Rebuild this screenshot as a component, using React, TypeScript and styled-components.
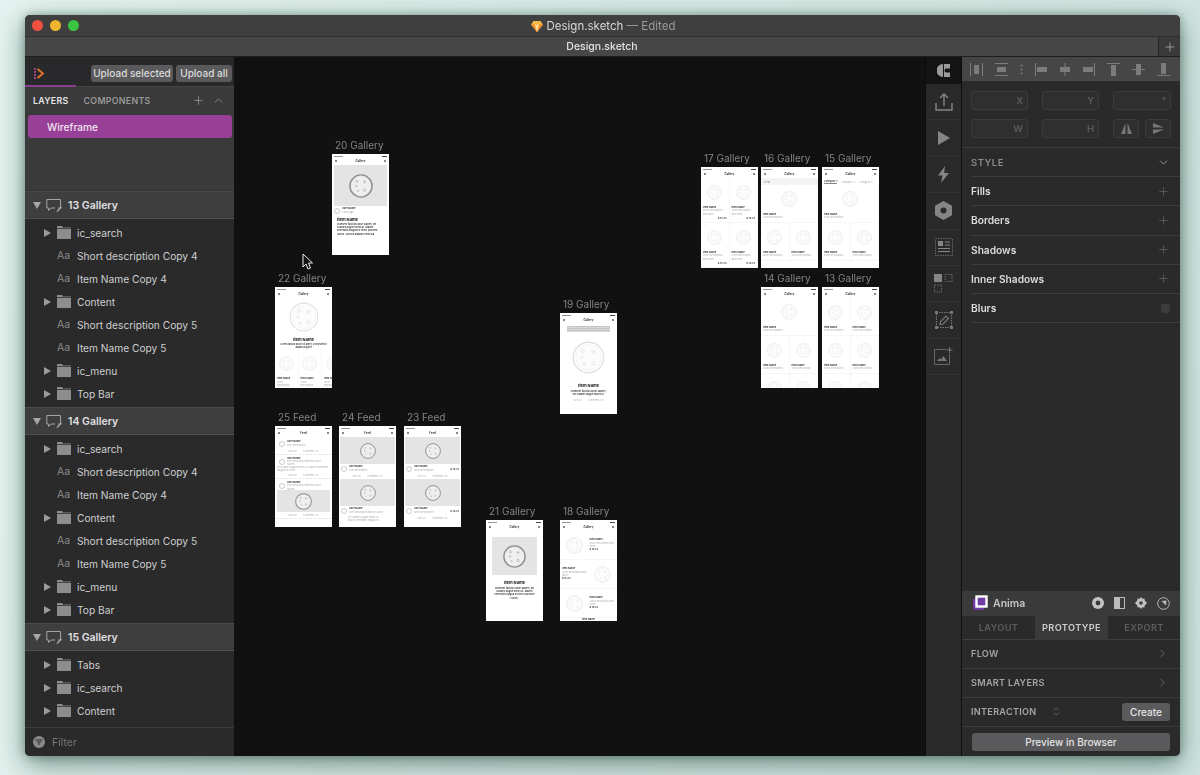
import React from 'react';
import styled, { createGlobalStyle } from 'styled-components';
import { ChevronDown, ChevronRight, ChevronUp, ChevronsUpDown, Plus } from 'lucide-react';

const GlobalStyle = createGlobalStyle`
  html, body { margin: 0; padding: 0; height: 100%; overflow: hidden; }
  body {
    font-family: Inter, "Liberation Sans", sans-serif;
    background: linear-gradient(100deg, #e3f3ef 0%, #d7e8e4 50%, #cfe4df 100%);
  }
`;

const Desktop = styled.div`
  width: 1200px;
  height: 775px;
  box-sizing: border-box;
  padding: 15px 20px 19px 25px;
`;

const Win = styled.div`
  height: 741px;
  display: flex;
  flex-direction: column;
  border-radius: 5px;
  overflow: hidden;
  background: #2a2a2b;
  box-shadow: 0 8px 26px rgba(20, 60, 50, 0.55), 0 0 8px rgba(20, 60, 50, 0.35);
  filter: blur(0.25px);
`;

/* title + tab bars */
const TitleBar = styled.div`
  height: 22px;
  flex: none;
  display: flex;
  align-items: center;
  padding-left: 7px;
  background: #3f3f40;
  border-bottom: 1px solid #2f2f2f;
  box-sizing: border-box;
`;
const Light = styled.span<{ $c: string }>`
  width: 11px;
  height: 11px;
  margin-right: 7px;
  border-radius: 50%;
  background: ${p => p.$c};
`;
const TitleText = styled.div`
  flex: 1;
  display: flex;
  align-items: center;
  justify-content: center;
  gap: 4px;
  margin-right: 60px;
  font-size: 11.5px;
  color: #d8d8d8;
  & em { font-style: normal; color: #9a9a9a; }
`;
const TabBar = styled.div`
  height: 20px;
  flex: none;
  display: flex;
  background: #474748;
  border-bottom: 1px solid #1e1e1e;
  box-sizing: border-box;
`;
const TabName = styled.div`
  flex: 1;
  padding-left: 21px;
  text-align: center;
  font-size: 10.5px;
  line-height: 19px;
  font-weight: 500;
  color: #e2e2e2;
`;
const TabPlus = styled.div`
  width: 21px;
  display: flex;
  align-items: center;
  justify-content: center;
  background: #3a3a3b;
  border-left: 1px solid #222;
  color: #a8a8a8;
`;

const Body = styled.div`
  flex: 1;
  min-height: 0;
  display: flex;
`;

/* left sidebar */
const Sidebar = styled.aside`
  width: 209px;
  flex: none;
  display: flex;
  flex-direction: column;
  background: #2a2a2b;
`;
const PluginBar = styled.div`
  height: 30px;
  flex: none;
  display: flex;
  align-items: center;
  box-sizing: border-box;
  padding: 3px 2px 0 9px;
  background: #29292b;
  border-bottom: 1px solid #444;
  position: relative;
  &::after {
    content: '';
    position: absolute;
    left: 0;
    bottom: -1px;
    width: 51px;
    height: 2px;
    background: #8c3f8e;
  }
`;
const UploadBtn = styled.button<{ $w: number }>`
  width: ${p => p.$w}px;
  height: 17px;
  padding: 0;
  margin-left: 3px;
  border: 0;
  border-radius: 3px;
  background: #5a5a5c;
  color: #dadada;
  font: 500 10px Inter, "Liberation Sans", sans-serif;
  white-space: nowrap;
`;
const Spacer = styled.div`
  flex: 1;
`;
const PagesPanel = styled.div`
  height: 104px;
  flex: none;
  background: #3a3a3b;
  box-sizing: border-box;
  border-bottom: 1px solid #333;
`;
const PagesHead = styled.div`
  height: 28px;
  box-sizing: border-box;
  display: flex;
  align-items: center;
  padding: 0 9px 2px 8px;
  color: #9d9d9d;
`;
const PageTab = styled.span<{ $on?: boolean }>`
  font-size: 8.8px;
  font-weight: 600;
  letter-spacing: 0.3px;
  margin-right: 15px;
  color: ${p => (p.$on ? '#e6e6e6' : '#989898')};
`;
const PageRow = styled.div`
  height: 23px;
  margin: 0 2px 0 3px;
  padding-left: 19px;
  border-radius: 3px;
  background: #983f97;
  color: #f0e4f0;
  font-size: 10.2px;
  font-weight: 500;
  line-height: 24px;
`;
const LayerList = styled.div`
  flex: 1;
  min-height: 0;
  overflow: hidden;
`;
const GroupHead = styled.div`
  height: 28px;
  box-sizing: border-box;
  display: flex;
  align-items: center;
  padding-left: 8px;
  gap: 5px;
  background: #3e3e3f;
  border-top: 1px solid #4a4a4a;
  border-bottom: 1px solid #4f4f4f;
  color: #e0e0e0;
  font-size: 10.5px;
  font-weight: 600;
`;
const GroupItems = styled.div`
  padding: 2px 0;
`;
const Item = styled.div`
  height: 23px;
  display: flex;
  align-items: center;
  padding-left: 18px;
  color: #cfcfcf;
  font-size: 10.2px;
`;
const ArrowSlot = styled.span`
  width: 13px;
  flex: none;
  display: flex;
`;
const IconSlot = styled.span`
  width: 21px;
  flex: none;
  display: flex;
  color: #8a8a8a;
  font-size: 10.5px;
  padding-left: 1px;
  box-sizing: border-box;
`;
const FilterBar = styled.div`
  height: 29px;
  flex: none;
  display: flex;
  align-items: center;
  gap: 7px;
  padding-left: 8px;
  box-sizing: border-box;
  border-top: 1px solid #3c3c3c;
  color: #777;
  font-size: 10.5px;
`;

/* canvas */
const Canvas = styled.main`
  flex: 1;
  position: relative;
  background: #111112;
  overflow: hidden;
`;
const Board = styled.div<{ $x: number; $y: number }>`
  position: absolute;
  left: ${p => p.$x - 234}px;
  top: ${p => p.$y - 57}px;
  width: 57px;
`;
const BoardLabel = styled.div`
  position: absolute;
  left: 3px;
  top: -15px;
  font-size: 10px;
  line-height: 13px;
  color: #848484;
  white-space: nowrap;
`;
const Screen = styled.div`
  height: 101px;
  overflow: hidden;
  background: #fff;
  color: #333;
  font-size: 2.6px;
  display: flex;
  flex-direction: column;
`;
const StatusLine = styled.div`
  height: 2px;
  margin: 1px 2px 0;
  flex: none;
  display: flex;
  justify-content: space-between;
  align-items: center;
  &::before { content: ''; width: 9px; height: 1px; background: #999; }
  &::after { content: ''; width: 5px; height: 1px; background: #444; }
`;
const Nav = styled.div`
  height: 8px;
  flex: none;
  display: flex;
  align-items: center;
  justify-content: space-between;
  padding: 0 3px;
  font-size: 2.8px;
  font-weight: 700;
  color: #333;
  & i { width: 2px; height: 2px; background: #888; display: block; }
`;
const Center = styled.div<{ $h?: number; $grey?: boolean; $inset?: number }>`
  flex: none;
  display: flex;
  align-items: center;
  justify-content: center;
  height: ${p => p.$h ?? 28}px;
  margin: 0 ${p => p.$inset ?? 0}px;
  background: ${p => (p.$grey ? '#e4e4e4' : 'transparent')};
`;
const Cells = styled.div<{ $cols?: number }>`
  flex: none;
  display: grid;
  grid-template-columns: repeat(${p => p.$cols ?? 2}, ${p => (p.$cols ? '23.5px' : '1fr')});
`;
const Cell = styled.div<{ $h?: number }>`
  height: ${p => p.$h ?? 38}px;
  flex: none;
  min-width: 0;
  padding: 0 2px;
  box-sizing: border-box;
  border-right: 1px dotted #efefef;
  border-bottom: 1px dotted #efefef;
  display: flex;
  flex-direction: column;
  overflow: hidden;
`;
const Name = styled.div<{ $big?: boolean; $mid?: boolean }>`
  font-weight: 700;
  color: ${p => (p.$big ? '#111' : '#333')};
  font-size: ${p => (p.$big ? 4 : 2.5)}px;
  line-height: ${p => (p.$big ? 7 : 3.4)}px;
  text-align: ${p => (p.$mid ? 'center' : 'left')};
  white-space: nowrap;
`;
const Note = styled.div<{ $mid?: boolean; $dark?: boolean }>`
  font-size: 2.4px;
  line-height: 3.2px;
  color: ${p => (p.$dark ? '#333' : '#aaa')};
  font-weight: ${p => (p.$dark ? 600 : 400)};
  text-align: ${p => (p.$mid ? 'center' : 'left')};
`;
const Price = styled.div`
  margin-top: 1px;
  font-size: 2.5px;
  font-weight: 700;
  text-align: right;
  color: #333;
`;
const Pad = styled.div<{ $x?: number }>`
  padding: 1px ${p => p.$x ?? 5}px;
  flex: none;
`;
const Filter = styled.div`
  height: 7px;
  flex: none;
  display: flex;
  align-items: center;
  padding: 0 3px;
  color: #888;
  background: #f4f4f4;
`;
const Tabs = styled(Filter)`
  gap: 4px;
  padding: 0 2px;
  white-space: nowrap;
  color: #aaa;
  background: #fff;
  & b { color: #333; font-weight: 600; border-bottom: 1px solid #888; }
`;
const UserLine = styled.div`
  height: 9px;
  flex: none;
  display: flex;
  align-items: center;
  gap: 2px;
  padding: 0 2px;
  & > span:first-child {
    width: 6px;
    height: 6px;
    flex: none;
    border-radius: 50%;
    border: 1px solid #ccc;
    box-sizing: border-box;
  }
  & > div { flex: 1; min-width: 0; }
`;
const Acts = styled.div`
  flex: none;
  display: flex;
  justify-content: center;
  gap: 6px;
  font-size: 2.2px;
  color: #aaa;
  height: 6px;
  align-items: center;
`;
const Stack = styled.div`
  height: 6px;
  margin: 2px 7px 0;
  flex: none;
  background: repeating-linear-gradient(180deg, #c4c4c4 0 1px, #d8d8d8 1px 2px);
`;
const Row18 = styled.div<{ $flip?: boolean }>`
  height: 28px;
  flex: none;
  display: flex;
  flex-direction: ${p => (p.$flip ? 'row-reverse' : 'row')};
  align-items: center;
  gap: 2px;
  padding: 0 2px;
  border-bottom: 1px dotted #eee;
  & > div { flex: 1; min-width: 0; }
`;
const Post = styled.div`
  padding: 2px 2px 0;
  flex: none;
  border-bottom: 1px dotted #ddd;
`;

/* right side */
const ToolStrip = styled.div`
  width: 37px;
  flex: none;
  display: flex;
  flex-direction: column;
  background: #2a2a2b;
  border-left: 1px solid #0c0c0c;
  border-right: 1px solid #0e0e0e;
  box-sizing: border-box;
`;
const ToolTop = styled.div`
  height: 27px;
  flex: none;
  background: #141415;
  display: flex;
  align-items: center;
  justify-content: center;
`;
const Tool = styled.div`
  height: 36.4px;
  flex: none;
  display: flex;
  align-items: center;
  justify-content: center;
  border-bottom: 1px solid #323233;
  box-sizing: border-box;
`;
const Inspector = styled.aside`
  width: 218px;
  flex: none;
  display: flex;
  flex-direction: column;
  background: #2a2a2b;
`;
const AlignBar = styled.div`
  height: 24px;
  flex: none;
  background: #464647;
  display: flex;
  align-items: center;
  justify-content: space-between;
  padding: 0 10px 0 8px;
`;
const Fields = styled.div`
  display: grid;
  grid-template-columns: 57px 57px 58px;
  column-gap: 14px;
  row-gap: 9px;
  padding: 10px 9px;
  border-bottom: 1px solid #3a3a3b;
  height: 67px;
  box-sizing: border-box;
  flex: none;
`;
const Field = styled.div`
  height: 19px;
  box-sizing: border-box;
  padding-right: 4px;
  text-align: right;
  line-height: 18px;
  font-size: 9.5px;
  font-weight: 600;
  color: #5c5c5c;
  background: #2f2f30;
  border: 1px solid #3b3b3c;
  border-radius: 3px;
`;
const FlipPair = styled.div`
  display: flex;
  justify-content: space-between;
`;
const FlipBtn = styled(Field)`
  width: 26px;
  padding: 0;
  display: flex;
  align-items: center;
  justify-content: center;
`;
const StyleRow = styled.div`
  height: 29.2px;
  flex: none;
  box-sizing: border-box;
  margin-left: 9px;
  padding-right: 10px;
  display: flex;
  align-items: center;
  justify-content: space-between;
  border-bottom: 1px solid #3b3b3c;
  color: #dcdcdc;
  font-size: 10.2px;
  font-weight: 600;
`;
const StyleHead = styled(StyleRow)`
  color: #8c8c8c;
  font-size: 9.5px;
  letter-spacing: 0.5px;
`;
const SmallBox = styled.span`
  width: 9px;
  height: 9px;
  border-radius: 2px;
  background: #3c3c3d;
`;
const AnimaHead = styled.div`
  height: 25px;
  flex: none;
  display: flex;
  align-items: center;
  gap: 5px;
  padding: 0 10px 1px 11px;
  box-sizing: border-box;
  background: #3a3a3b;
  color: #c4c4c4;
  font-size: 10.5px;
  font-weight: 600;
`;
const AnimaTabs = styled.div`
  height: 24px;
  flex: none;
  display: grid;
  grid-template-columns: 73px 73px 72px;
  border-bottom: 1px solid #3e3e3f;
  box-sizing: border-box;
`;
const AnimaTab = styled.div<{ $on?: boolean }>`
  text-align: center;
  line-height: 24px;
  font-size: 9.2px;
  font-weight: 600;
  letter-spacing: 0.4px;
  color: ${p => (p.$on ? '#cfcfcf' : '#5e5e5e')};
  background: ${p => (p.$on ? '#3a3a3b' : 'transparent')};
`;
const AnimaRow = styled.div`
  height: 29px;
  flex: none;
  box-sizing: border-box;
  padding: 0 11px 2px 9px;
  display: flex;
  align-items: center;
  justify-content: space-between;
  border-bottom: 1px solid #3b3b3c;
  font-size: 9.1px;
  font-weight: 600;
  letter-spacing: 0.3px;
  color: #a5a5a5;
`;
const InteractionLabel = styled.span`
  display: flex;
  align-items: center;
  gap: 14px;
`;
const GreyBtn = styled.button`
  height: 18px;
  padding: 0 0 1px;
  border: 0;
  border-radius: 3px;
  background: #5a5a5c;
  color: #e4e4e4;
  font: 500 10px Inter, "Liberation Sans", sans-serif;
`;
const CreateBtn = styled(GreyBtn)`
  width: 48px;
  margin: 2px -1px 0 0;
`;
const PreviewWrap = styled.div`
  padding: 6px 10px 5px;
  flex: none;
  display: flex;
  & button { flex: 1; }
`;
const AnimaIcon = styled.svg`
  margin-right: 5px;
`;
const Cursor = styled.svg`
  position: absolute;
  left: 68px;
  top: 196px;
`;

const SketchGem = () => (
  <svg width="12" height="12" viewBox="0 0 12 12">
    <path d="M2.5 1h7L12 4.5 6 12 0 4.5z" fill="#f5b945" />
    <path d="M0 4.5h12L6 12z" fill="#ef8a2b" />
    <path d="M3.5 4.5h5L6 12z" fill="#fbd98a" />
  </svg>
);
const AnimaMark = () => (
  <svg width="11" height="13" viewBox="0 0 11 13">
    <path d="M1 1v11" stroke="#c04a9c" strokeWidth="1.6" strokeDasharray="2 1" />
    <path d="M3.5 2l5.5 4.5L3.5 11" fill="none" stroke="#e8762c" strokeWidth="1.8" />
  </svg>
);
const Tri = ({ down }: { down?: boolean }) => (
  <svg width="8" height="8" viewBox="0 0 8 8" fill={down ? '#a6a6a6' : '#9c9c9c'}>
    <path d={down ? 'M0 1h8L4 8z' : 'M1 0l7 4-7 4z'} />
  </svg>
);
const ArtboardIcon = () => (
  <svg width="17" height="16" viewBox="0 0 17 16" fill="none" stroke="#a4a4a4" strokeWidth="1">
    <path d="M2 2.5h12.5v8.5H12M9 11H5l-2.5 2.5V11H.8V2.5H2" />
    <path d="M15 9.5l1 1-4 4-1.5.4.4-1.5z" fill="#a4a4a4" stroke="none" />
  </svg>
);
const Folder = () => (
  <svg width="14" height="13" viewBox="0 0 14 13" fill="#8e8c8e">
    <path d="M0 0h5l1 1.5h8V2.3H0zM0 3h14v10H0z" />
  </svg>
);
const FilterIcon = () => (
  <svg width="12" height="12" viewBox="0 0 12 12">
    <circle cx="6" cy="6" r="6" fill="#8a8a8a" />
    <path d="M2.5 4h7M3.8 6h4.4M5 8h2" stroke="#2a2a2b" strokeWidth="1.1" />
  </svg>
);
const Pizza = ({ size, strong }: { size: number; strong?: boolean }) => (
  <svg width={size} height={size} viewBox="0 0 40 40" fill="none">
    <circle cx="20" cy="20" r="18.5" stroke={strong ? '#8f8f8f' : '#e0e0e0'} strokeWidth={strong ? 2.4 : 1.6} />
    <circle cx="20" cy="20" r="15.5" fill={strong ? '#efefef' : '#fcfcfc'} stroke="#f0f0f0" />
    <g stroke={strong ? '#a8a8a8' : '#e2e2e2'} strokeWidth="1">
      <circle cx="13" cy="12" r="2" />
      <circle cx="26" cy="27" r="2.2" />
      <circle cx="15" cy="28" r="1.2" />
      <path d="M26 10v6M23 13h6M10 20h4M12 18v4" />
    </g>
  </svg>
);

const Chrome = ({ title, children }: { title: string; children: React.ReactNode }) => (
  <Screen>
    <StatusLine />
    <Nav>
      <i />
      <span>{title}</span>
      <i />
    </Nav>
    {children}
  </Screen>
);
// cut: the artboard ends before this cell's texts, so only the pizza shows
const GridCell = ({ price, cut }: { price?: boolean; cut?: boolean }) => (
  <Cell $h={price ? 45 : 38}>
    <Center $h={28}>
      <Pizza size={15} />
    </Center>
    {!cut && <Name>Item Name</Name>}
    {!cut && <Note>Short description{price ? ' and more' : ''}</Note>}
    {price && <Price>$ 15.73</Price>}
  </Cell>
);
const WideCell = () => (
  <Cell>
    <Center $h={28}>
      <Pizza size={16} />
    </Center>
    <Name>Item Name</Name>
    <Note>Short description</Note>
  </Cell>
);
const TwoCells = ({ n, price, cutFrom }: { n: number; price?: boolean; cutFrom?: number }) => (
  <Cells>
    {Array.from({ length: n }, (_, i) => (
      <GridCell key={i} price={price} cut={cutFrom !== undefined && i >= cutFrom} />
    ))}
  </Cells>
);
const Likes = () => (
  <Acts>
    <span>Like (12)</span>
    <span>Comments (17)</span>
  </Acts>
);
const UserRow = ({ text, price }: { text?: string; price?: boolean }) => (
  <UserLine>
    <span />
    <div>
      <Name>User Name</Name>
      <Note>{text ?? 'Short description'}</Note>
    </div>
    {price && <Price>$ 15.73</Price>}
  </UserLine>
);
const Item18 = ({ flip }: { flip?: boolean }) => (
  <Row18 $flip={flip}>
    <Center $h={20}>
      <Pizza size={17} />
    </Center>
    <div>
      <Name>Item Name</Name>
      <Note>Short description and more</Note>
      <Name>$ 15.73</Name>
    </div>
  </Row18>
);

const boards: { name: string; x: number; y: number; title: string; body: React.ReactNode }[] = [
  {
    name: '20 Gallery', x: 332, y: 154, title: 'Gallery',
    body: (
      <>
        <Center $h={41} $grey $inset={2}>
          <Pizza size={24} strong />
        </Center>
        <UserRow text="1 hour ago" />
        <Pad>
          <Name $big>Item Name</Name>
          <Note $dark>Praesent facilisis dolor sapien, vel sodales augue mollis ut. Mauris venenatis magna eu tortor posuere luctus. Sed dui aliquam vehicula.</Note>
        </Pad>
      </>
    ),
  },
  {
    name: '22 Gallery', x: 275, y: 287, title: 'Gallery',
    body: (
      <>
        <Center $h={38}>
          <Pizza size={30} />
        </Center>
        <Name $big $mid>Item Name</Name>
        <Note $dark $mid>Lorem ipsum dolor sit amet, consectetur adipiscing elit</Note>
        <Cells $cols={3}>
          <GridCell />
          <GridCell />
          <GridCell />
        </Cells>
      </>
    ),
  },
  { name: '17 Gallery', x: 701, y: 167, title: 'Gallery', body: <TwoCells n={4} price /> },
  {
    name: '16 Gallery', x: 761, y: 167, title: 'Gallery',
    body: (
      <>
        <Filter>Filter</Filter>
        <WideCell />
        <TwoCells n={2} />
      </>
    ),
  },
  {
    name: '15 Gallery', x: 822, y: 167, title: 'Gallery',
    body: (
      <>
        <Tabs>
          <b>Category 1</b>
          <span>Category 2</span>
          <span>Category 3</span>
        </Tabs>
        <WideCell />
        <TwoCells n={2} />
      </>
    ),
  },
  {
    name: '14 Gallery', x: 761, y: 287, title: 'Gallery',
    body: (
      <>
        <WideCell />
        <TwoCells n={4} cutFrom={2} />
      </>
    ),
  },
  { name: '13 Gallery', x: 822, y: 287, title: 'Gallery', body: <TwoCells n={6} cutFrom={4} /> },
  {
    name: '19 Gallery', x: 560, y: 313, title: 'Gallery',
    body: (
      <>
        <Stack />
        <Center $h={50}>
          <Pizza size={33} />
        </Center>
        <Name $big $mid>Item Name</Name>
        <Pad $x={9}>
          <Note $dark $mid>Praesent facilisis dolor sapien, vel sodales augue mollis ut.</Note>
        </Pad>
        <Likes />
      </>
    ),
  },
  {
    name: '25 Feed', x: 275, y: 426, title: 'Feed',
    body: (
      <>
        <Post>
          <UserRow text="Post description" />
          <Likes />
        </Post>
        <Post>
          <UserRow text="Post description facilisis dolor sapien" />
          <Note>vel sodales augue mollis ut. Mauris venenatis magna eu tortor...</Note>
          <Likes />
        </Post>
        <Post>
          <UserRow text="Post description facilisis dolor sapien" />
          <Center $h={22} $grey>
            <Pizza size={17} strong />
          </Center>
          <Likes />
        </Post>
      </>
    ),
  },
  {
    name: '24 Feed', x: 339, y: 426, title: 'Feed',
    body: (
      <>
        <Center $h={27} $grey $inset={1}>
          <Pizza size={16} strong />
        </Center>
        <UserRow text="Post description" />
        <Likes />
        <Center $h={27} $grey $inset={1}>
          <Pizza size={16} strong />
        </Center>
        <UserRow text="Post description facilisis dolor" />
        <Pad $x={9}>
          <Note>vel sodales augue mollis ut. Mauris venenatis magna eu...</Note>
        </Pad>
      </>
    ),
  },
  {
    name: '23 Feed', x: 404, y: 426, title: 'Feed',
    body: (
      <>
        <Center $h={27} $grey $inset={1}>
          <Pizza size={16} strong />
        </Center>
        <UserRow price />
        <Likes />
        <Center $h={27} $grey $inset={1}>
          <Pizza size={16} strong />
        </Center>
        <UserRow price />
        <Likes />
      </>
    ),
  },
  {
    name: '21 Gallery', x: 486, y: 520, title: 'Gallery',
    body: (
      <>
        <Center $h={6} />
        <Center $h={38} $grey $inset={6}>
          <Pizza size={23} strong />
        </Center>
        <Center $h={4} />
        <Name $big $mid>Item Name</Name>
        <Pad $x={8}>
          <Note $dark $mid>Praesent facilisis dolor sapien, vel sodales augue mollis ut. Mauris venenatis magna eu tortor posuere luctus.</Note>
        </Pad>
      </>
    ),
  },
  {
    name: '18 Gallery', x: 560, y: 520, title: 'Gallery',
    body: (
      <>
        <Item18 />
        <Item18 flip />
        <Item18 />
        <Name $mid>Item Name</Name>
      </>
    ),
  },
];

const layerRows = [
  'ic_search',
  'Aa:Short description Copy 4',
  'Aa:Item Name Copy 4',
  'Content',
  'Aa:Short description Copy 5',
  'Aa:Item Name Copy 5',
  'ic_menu',
  'Top Bar',
];
const groups = [
  { name: '13 Gallery', rows: layerRows },
  { name: '14 Gallery', rows: layerRows },
  { name: '15 Gallery', rows: ['Tabs', 'ic_search', 'Content'] },
];

const G = '#858585';
const toolIcons = [
  <svg key="up" width="20" height="20" viewBox="0 0 20 20" fill="none" stroke={G} strokeWidth="1.4">
    <path d="M10 14V2M6 6l4-4 4 4M2 11v7h16v-7" />
  </svg>,
  <svg key="play" width="12" height="14" viewBox="0 0 12 14" fill={G}><path d="M0 0l12 7-12 7z" /></svg>,
  <svg key="bolt" width="11" height="17" viewBox="0 0 11 17" fill={G}><path d="M7 0L0 9.5h4.5L3 17l8-10H6.2z" /></svg>,
  <svg key="hex" width="17" height="19" viewBox="0 0 17 19">
    <path d="M8.5 0l8.5 4.8v9.4L8.5 19 0 14.2V4.8z" fill={G} />
    <circle cx="8.5" cy="9.5" r="3" fill="#2a2a2b" />
  </svg>,
  <svg key="lay" width="18" height="18" viewBox="0 0 18 18" fill="none">
    <rect x=".5" y=".5" width="17" height="17" stroke="#666" strokeDasharray="1.5 1" />
    <rect x="3" y="3" width="5" height="5" fill={G} />
    <path d="M10 4h5M10 7h5M3 10.5h12M3 13.5h12" stroke={G} />
  </svg>,
  <svg key="sym" width="19" height="19" viewBox="0 0 19 19" fill="none">
    <rect x="0" y="0" width="8" height="8" fill={G} />
    <rect x="11" y=".5" width="7" height="7" stroke="#666" strokeDasharray="1.5 1" />
    <rect x=".5" y="11" width="7" height="7" stroke="#666" strokeDasharray="1.5 1" />
  </svg>,
  <svg key="edit" width="18" height="18" viewBox="0 0 18 18" fill="none" stroke="#777">
    <rect x="1.5" y="1.5" width="15" height="15" strokeDasharray="1.5 1" />
    <path d="M5 13.5l.6-3L11 5l2.5 2.5L8 13z" strokeWidth="1.2" />
    <path d="M0 0h3v3H0zM15 0h3v3h-3zM0 15h3v3H0zM15 15h3v3h-3z" fill="#777" stroke="none" />
  </svg>,
  <svg key="img" width="19" height="18" viewBox="0 0 19 18" fill="none" stroke="#666">
    <path d="M12 2.5H.5v15h15V7" />
    <path d="M3 14l2.5-3 1.5 1.5L9.5 9l3.5 5z" fill="#777" stroke="none" />
    <path d="M15.5 0v6M12.5 3h6" stroke="#777" />
  </svg>,
];

const A = '#7c7c7c';
const alignIcons = [
  <svg key="0" width="13" height="13" viewBox="0 0 13 13"><path d="M.5 0v13M12.5 0v13" stroke={A} /><rect x="4" y="2" width="5" height="9" fill={A} /></svg>,
  <svg key="1" width="13" height="13" viewBox="0 0 13 13"><path d="M0 .5h13M0 12.5h13" stroke={A} /><rect x="2" y="4" width="9" height="5" fill={A} /></svg>,
  <svg key="2" width="3" height="11" viewBox="0 0 3 11" fill={A}><circle cx="1.5" cy="1.5" r="1" /><circle cx="1.5" cy="5.5" r="1" /><circle cx="1.5" cy="9.5" r="1" /></svg>,
  <svg key="3" width="12" height="13" viewBox="0 0 12 13"><path d="M.5 0v13" stroke={A} /><rect x="2" y="4" width="10" height="5" fill={A} /></svg>,
  <svg key="4" width="12" height="13" viewBox="0 0 12 13"><path d="M6 0v13" stroke={A} /><rect x="1" y="4" width="10" height="5" fill={A} /></svg>,
  <svg key="5" width="12" height="13" viewBox="0 0 12 13"><path d="M11.5 0v13" stroke={A} /><rect x="0" y="4" width="10" height="5" fill={A} /></svg>,
  <svg key="6" width="13" height="13" viewBox="0 0 13 13"><path d="M0 .5h13" stroke={A} /><rect x="4" y="2" width="5" height="11" fill={A} /></svg>,
  <svg key="7" width="13" height="13" viewBox="0 0 13 13"><path d="M0 6.5h13" stroke={A} /><rect x="4" y="1" width="5" height="11" fill={A} /></svg>,
  <svg key="8" width="13" height="13" viewBox="0 0 13 13"><path d="M0 12.5h13" stroke={A} /><rect x="4" y="0" width="5" height="11" fill={A} /></svg>,
];

const styleRows = ['Fills', 'Borders', 'Shadows', 'Inner Shadows'];

const App = () => (
  <Desktop>
    <GlobalStyle />
    <Win>
      <TitleBar>
        <Light $c="#f0503f" />
        <Light $c="#efb52e" />
        <Light $c="#3bc43f" />
        <TitleText>
          <SketchGem />
          <span>
            Design.sketch <em>— Edited</em>
          </span>
        </TitleText>
      </TitleBar>
      <TabBar>
        <TabName>Design.sketch</TabName>
        <TabPlus>
          <Plus size={14} strokeWidth={1.4} />
        </TabPlus>
      </TabBar>
      <Body>
        <Sidebar>
          <PluginBar>
            <AnimaMark />
            <Spacer />
            <UploadBtn $w={82}>Upload selected</UploadBtn>
            <UploadBtn $w={56}>Upload all</UploadBtn>
          </PluginBar>
          <PagesPanel>
            <PagesHead>
              <PageTab $on>LAYERS</PageTab>
              <PageTab>COMPONENTS</PageTab>
              <Spacer />
              <Plus size={13} strokeWidth={1.3} />
              <ChevronUp size={13} strokeWidth={1.3} style={{ marginLeft: 7 }} />
            </PagesHead>
            <PageRow>Wireframe</PageRow>
          </PagesPanel>
          <LayerList>
            {groups.map(g => (
              <div key={g.name}>
                <GroupHead>
                  <Tri down />
                  <ArtboardIcon />
                  {g.name}
                </GroupHead>
                <GroupItems>
                  {g.rows.map((r, i) => {
                    const isText = r.startsWith('Aa:');
                    return (
                      <Item key={i}>
                        <ArrowSlot>{!isText && <Tri />}</ArrowSlot>
                        <IconSlot>{isText ? 'Aa' : <Folder />}</IconSlot>
                        {isText ? r.slice(3) : r}
                      </Item>
                    );
                  })}
                </GroupItems>
              </div>
            ))}
          </LayerList>
          <FilterBar>
            <FilterIcon />
            Filter
          </FilterBar>
        </Sidebar>

        <Canvas>
          {boards.map(b => (
            <Board key={b.name} $x={b.x} $y={b.y}>
              <BoardLabel>{b.name}</BoardLabel>
              <Chrome title={b.title}>{b.body}</Chrome>
            </Board>
          ))}
          <Cursor width="12" height="17" viewBox="0 0 12 17">
            <path d="M1 1v13l3-3 2 5 2.5-1-2-5h4z" fill="#111" stroke="#eee" strokeWidth="1" />
          </Cursor>
        </Canvas>

        <ToolStrip>
          <ToolTop>
            <svg width="13" height="13" viewBox="0 0 13 13" fill="#9a9a9a">
              <path d="M6 0v13A6.5 6.5 0 0 1 6 0zM7 0h6v4.5H9.5a2 2 0 0 0 0 4H13V13H7z" />
            </svg>
          </ToolTop>
          {toolIcons.map((icon, i) => (
            <Tool key={i}>{icon}</Tool>
          ))}
        </ToolStrip>

        <Inspector>
          <AlignBar>{alignIcons}</AlignBar>
          <Fields>
            <Field>X</Field>
            <Field>Y</Field>
            <Field>°</Field>
            <Field>W</Field>
            <Field>H</Field>
            <FlipPair>
              <FlipBtn>
                <svg width="11" height="11" viewBox="0 0 11 11" fill="#777"><path d="M4.5 0v11H0zM6.5 0v11H11z" /></svg>
              </FlipBtn>
              <FlipBtn>
                <svg width="11" height="11" viewBox="0 0 11 11" fill="#777"><path d="M0 0l11 4.5H0zM0 6.5h11L0 11z" /></svg>
              </FlipBtn>
            </FlipPair>
          </Fields>
          <StyleHead>
            STYLE
            <ChevronDown size={13} strokeWidth={1.4} color="#b0b0b0" />
          </StyleHead>
          {styleRows.map(r => (
            <StyleRow key={r}>
              {r}
              <Plus size={13} strokeWidth={1.2} color="#6e6e6e" />
            </StyleRow>
          ))}
          <StyleRow>
            Blurs
            <SmallBox />
          </StyleRow>
          <Spacer />
          <AnimaHead>
            <svg width="15" height="16" viewBox="0 0 15 16">
              <rect x="0" y="3" width="12" height="12" rx="3" fill="#6f3aa6" />
              <rect x="3.5" y="1.5" width="10" height="10" fill="#6f3aa6" stroke="#fff" strokeWidth="2.4" />
            </svg>
            Anima
            <Spacer />
            <AnimaIcon width="12" height="12" viewBox="0 0 12 12">
              <circle cx="6" cy="6" r="6" fill="#c2c2c2" />
              <circle cx="6" cy="6" r="2.4" fill="#3a3a3b" />
            </AnimaIcon>
            <AnimaIcon width="11" height="12" viewBox="0 0 11 12">
              <rect x=".5" y=".5" width="10" height="11" fill="none" stroke="#bbb" />
              <rect x="0" y="0" width="6" height="12" fill="#bbb" />
            </AnimaIcon>
            <AnimaIcon width="12" height="12" viewBox="0 0 12 12">
              <path d="M6 0l1.3 1.7 2.1-.3.3 2.1L12 6l-2.3 2.5-.3 2.1-2.1-.3L6 12l-1.3-1.7-2.1.3-.3-2.1L0 6l2.3-2.5.3-2.1 2.1.3z" fill="#c2c2c2" />
              <circle cx="6" cy="6" r="1.8" fill="#3a3a3b" />
            </AnimaIcon>
            <svg width="13" height="13" viewBox="0 0 13 13" fill="none" stroke="#bbb">
              <circle cx="6.5" cy="6.5" r="5.8" />
              <path d="M4.5 4l5-.5-.5 5z" fill="#bbb" stroke="none" />
            </svg>
          </AnimaHead>
          <AnimaTabs>
            <AnimaTab>LAYOUT</AnimaTab>
            <AnimaTab $on>PROTOTYPE</AnimaTab>
            <AnimaTab>EXPORT</AnimaTab>
          </AnimaTabs>
          <AnimaRow>
            FLOW
            <ChevronRight size={13} strokeWidth={1.2} color="#8a8a8a" />
          </AnimaRow>
          <AnimaRow>
            SMART LAYERS
            <ChevronRight size={13} strokeWidth={1.2} color="#8a8a8a" />
          </AnimaRow>
          <AnimaRow>
            <InteractionLabel>
              INTERACTION
              <ChevronsUpDown size={11} strokeWidth={1.2} color="#8a8a8a" />
            </InteractionLabel>
            <CreateBtn>Create</CreateBtn>
          </AnimaRow>
          <PreviewWrap>
            <GreyBtn>Preview in Browser</GreyBtn>
          </PreviewWrap>
        </Inspector>
      </Body>
    </Win>
  </Desktop>
);

export default App;
